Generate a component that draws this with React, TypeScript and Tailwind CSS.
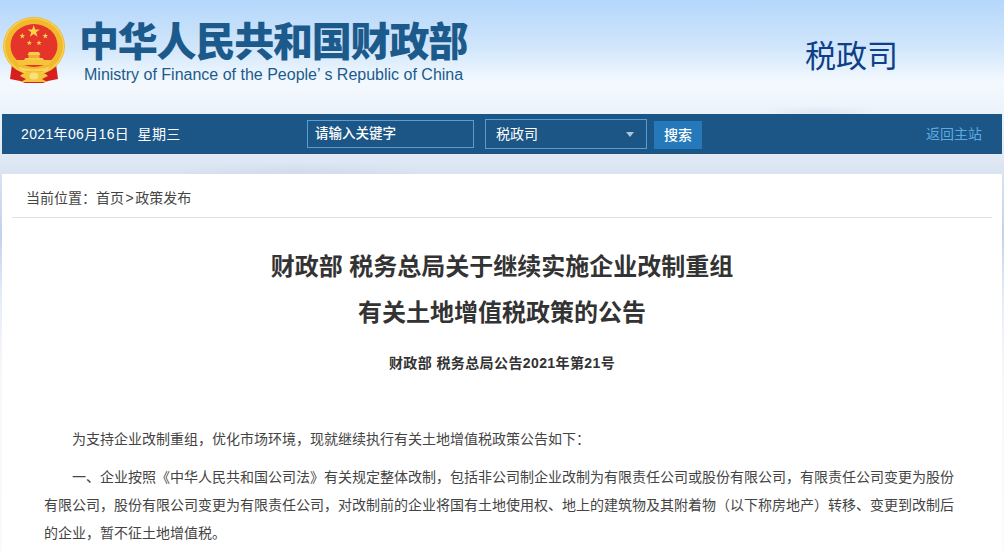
const CJK = "font-['Liberation_Sans','Noto_Sans_CJK_SC',sans-serif]";

function Emblem() {
  const star = (cx: number, cy: number, r: number) => {
    const pts: string[] = [];
    for (let i = 0; i < 10; i++) {
      const rad = i % 2 === 0 ? r : r * 0.4;
      const a = (Math.PI / 5) * i - Math.PI / 2;
      pts.push(`${cx + rad * Math.cos(a)},${cy + rad * Math.sin(a)}`);
    }
    return <polygon points={pts.join(" ")} fill="#f9d548" />;
  };
  return (
    <svg width="62" height="67" viewBox="3 17 62 67" className="shrink-0">
      <path d="M12 64 L10 79 L20 81 L25 83 L43 83 L48 81 L58 79 L56 64 L46 72 L22 72 Z" fill="#d6201f" />
      <ellipse cx="34" cy="46" rx="31" ry="29" fill="#f1b92b" />
      <ellipse cx="34" cy="46" rx="29.5" ry="27.5" fill="none" stroke="#f8d35a" strokeWidth="1.2" />
      <ellipse cx="34" cy="45.5" rx="23.5" ry="21.5" fill="#e5352b" />
      {star(33.7, 31.5, 6.5)}
      {star(22.3, 36, 3)}
      {star(45.3, 36, 3)}
      {star(29.3, 43, 2.8)}
      {star(39, 43, 2.8)}
      <path d="M29 52 H39 L40.5 55 H27.5 Z" fill="#f6cf45" />
      <rect x="28.5" y="55" width="11" height="3" fill="#f0a93a" />
      <path d="M25.5 58 H42.5 L44 60 H24 Z" fill="#f6cf45" />
      <path d="M16 60 H52 L49 65 H19 Z" fill="#f3c43c" />
      <path d="M18 66 C24 70 44 70 50 66 L47 71 H21 Z" fill="#f8d35a" />
      <path d="M20 76 C24 71 30 73 34 70 C38 73 44 71 48 76 L42 79 L47 82 H21 L26 79 Z" fill="#f3c53c" />
      <ellipse cx="34" cy="76" rx="4.5" ry="3.5" fill="#f9e07a" />
    </svg>
  );
}

export default function App() {
  return (
    <div className={`${CJK} h-[551px] w-[1004px] overflow-hidden bg-[radial-gradient(ellipse_60px_6px_at_820px_112px,#e0e8f3_0%,transparent_100%),radial-gradient(ellipse_130px_12px_at_300px_174px,#d0dcec_0%,transparent_100%),linear-gradient(180deg,#b4d7fb_0px,#cfe5fb_45px,#f3f9fe_82px,#edf3fb_110px,#dfe8f4_160px,#d6e1f0_180px,#c3d2ea_235px,#e6edf8_300px,#f8f8fb_380px,#fafafa_551px)]`}>
      <header className="flex h-[114px] items-start">
        <div className="ml-[3px] mt-[17px]"><Emblem /></div>
        <div className="ml-[14px] mt-[20px] flex flex-col">
          <h1 className="text-[40px] font-black leading-[44px] tracking-[-1.2px] text-[#1c5a8c] whitespace-nowrap">中华人民共和国财政部</h1>
          <p className="ml-[5px] mt-[2px] text-base leading-[18px] text-[#1c5a8c] whitespace-nowrap">Ministry of Finance of the People’ s Republic of China</p>
        </div>
        <div className="ml-auto mr-[106px] mt-[36px] text-[31px] leading-[42px] text-[#0f3f87]">税政司</div>
      </header>

      <nav className="mx-[2px] flex h-10 w-[1000px] items-center bg-[#1b5686] text-sm text-white">
        <span className="ml-[19px] w-[286px] whitespace-nowrap tracking-[0.35px]">2021年06月16日&nbsp;&nbsp;星期三</span>
        <div className="flex h-7 w-[167px] items-center border border-[#5b9dd0] pl-[7px] text-[13.5px] font-medium">请输入关键字</div>
        <div className="ml-[11px] flex h-[30px] w-[162px] items-center justify-between border border-[#5b9dd0] pl-[10px] pr-3">
          <span>税政司</span>
          <span className="h-0 w-0 border-x-4 border-t-[5px] border-x-transparent border-t-[#a9c6de]" />
        </div>
        <button className="ml-[7px] mt-[2px] h-7 w-12 bg-[#2579ba] text-sm font-medium text-white">搜索</button>
        <a className="ml-auto mr-[20px] text-[#5eaae0]">返回主站</a>
      </nav>

      <main className="mx-[2px] mt-5 h-[377px] w-[1000px] bg-white text-[#333]">
        <div className="mx-[10px] flex h-[44px] items-center border-b border-[#e3e3e3] pl-[14px] pt-1 text-sm text-[#444]">
          当前位置：首页<span className="mx-[1.5px]">&gt;</span>政策发布
        </div>
        <h2 className="mt-[26px] text-center text-2xl font-bold leading-[46px] text-[#333]">
          财政部 税务总局关于继续实施企业改制重组<br />有关土地增值税政策的公告
        </h2>
        <p className="mt-[17px] text-center text-sm font-bold leading-5 tracking-[0.4px] text-[#333]">财政部 税务总局公告2021年第21号</p>
        <div className="ml-[42px] mr-[48px] mt-[52px] text-sm leading-7 text-[#444]">
          <p className="indent-7">为支持企业改制重组，优化市场环境，现就继续执行有关土地增值税政策公告如下：</p>
          <p className="mt-2.5 indent-7 text-justify">一、企业按照《中华人民共和国公司法》有关规定整体改制，包括非公司制企业改制为有限责任公司或股份有限公司，有限责任公司变更为股份有限公司，股份有限公司变更为有限责任公司，对改制前的企业将国有土地使用权、地上的建筑物及其附着物（以下称房地产）转移、变更到改制后的企业，暂不征土地增值税。</p>
        </div>
      </main>
    </div>
  );
}
